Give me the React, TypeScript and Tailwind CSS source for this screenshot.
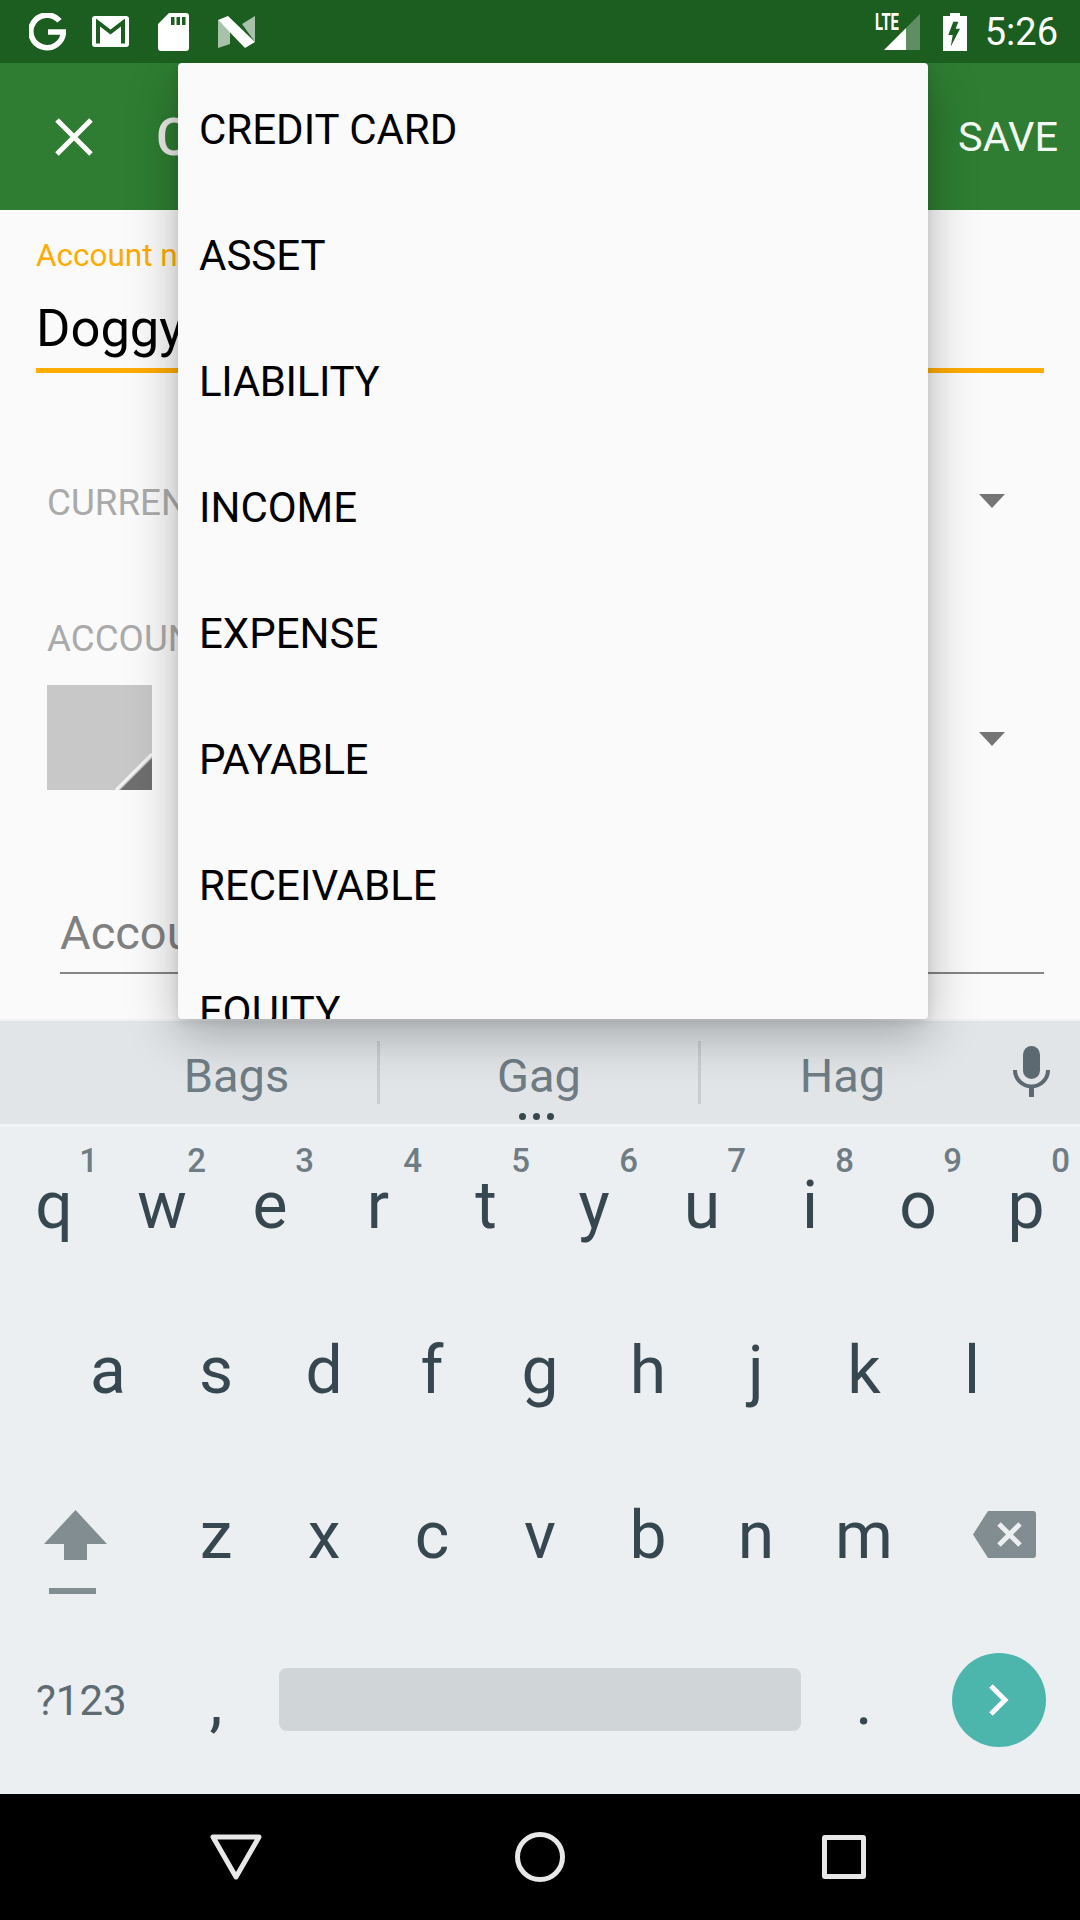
import React from "react";

const row1 = ["q", "w", "e", "r", "t", "y", "u", "i", "o", "p"];
const nums = ["1", "2", "3", "4", "5", "6", "7", "8", "9", "0"];
const row2 = ["a", "s", "d", "f", "g", "h", "j", "k", "l"];
const row3 = ["z", "x", "c", "v", "b", "n", "m"];
const menu = [
  { t: "CREDIT CARD", c: "" },
  { t: "ASSET", c: "" },
  { t: "LIABILITY", c: "tracking-[-0.35px]" },
  { t: "INCOME", c: "" },
  { t: "EXPENSE", c: "" },
  { t: "PAYABLE", c: "tracking-[-0.5px]" },
  { t: "RECEIVABLE", c: "" },
  { t: "EQUITY", c: "" },
];

function Key({ c, sup }: { c: string; sup?: string }) {
  return (
    <div className="relative w-[108px] h-full flex items-center justify-center pb-[9px] text-[66px] leading-[80px] text-[#37474f]">
      {c}
      {sup && (
        <span className="absolute right-[10px] top-[14px] text-[33px] leading-[40px] font-medium text-[#6f7c83]">{sup}</span>
      )}
    </div>
  );
}

function Caret({ className }: { className: string }) {
  return (
    <svg width="26" height="14" viewBox="0 0 26 14" className={className}>
      <path d="M0 0H26L13 14Z" fill="#757575" />
    </svg>
  );
}

export default function App() {
  return (
    <div className="relative w-[1080px] h-[1920px] overflow-hidden flex flex-col bg-[#fafafa] font-['Roboto',sans-serif]">
      {/* status bar */}
      <div className="relative z-20 h-[63px] shrink-0 bg-[#1b5e20] flex items-center text-white">
        <svg width="37" height="38" viewBox="0 0 37 38" className="ml-[29px]" fill="none">
          <path d="M30.5 7.8A16.3 16.3 0 1 0 34.4 19H19" stroke="#fff" strokeWidth="5.6" />
        </svg>
        <svg width="37" height="31" viewBox="0 0 37 31" className="ml-[26px]">
          <rect x="0" y="0" width="37" height="31" rx="3" fill="#fff" />
          <path d="M6 27.500V6.500L18.500 16L31 6.500V27.500" stroke="#1b5e20" strokeWidth="4" fill="none" />
        </svg>
        <svg width="31" height="38" viewBox="0 0 31 38" className="ml-[29px]">
          <path d="M11 0H28a3 3 0 0 1 3 3V35a3 3 0 0 1-3 3H3a3 3 0 0 1-3-3V11Z" fill="#fff" />
          <path d="M13 4h3.500v8H13ZM18.500 4H22v8h-3.500ZM24 4h3.500v8H24Z" fill="#1b5e20" />
        </svg>
        <svg width="37" height="32" viewBox="0 0 37 32" className="ml-[29px]">
          <path d="M0 4L12 16V28L0 32Z" fill="#fff" opacity="0.62" />
          <path d="M24 8L37 0V26Z" fill="#fff" opacity="0.62" />
          <path d="M0 4L10 0L37 26L27 32Z" fill="#fff" />
        </svg>
        <svg width="46" height="38" viewBox="0 0 46 38" className="ml-auto overflow-visible">
          <text x="0" y="17" fontSize="23" fontWeight="700" fill="#fff" textLength="24" lengthAdjust="spacingAndGlyphs" fontFamily="Roboto">LTE</text>
          <path d="M31 15L45 1V37H31Z" fill="#fff" opacity="0.3" />
          <path d="M9 37L31 15V37Z" fill="#fff" />
        </svg>
        <svg width="24" height="38" viewBox="0 0 24 38" className="ml-[22px]">
          <path d="M7 0H17V3H24V38H0V3H7Z" fill="#fff" />
          <path d="M10.300 8.700H15.300L12.700 15.700H17L7.700 33.700L9.700 22H5.300Z" fill="#1b5e20" />
        </svg>
        <span className="ml-[18px] mr-[22px] text-[38px] leading-[44px]">5:26</span>
      </div>

      {/* toolbar */}
      <div className="h-[147px] shrink-0 bg-[#2e7d32] flex items-center text-white">
        <svg width="38" height="38" viewBox="0 0 38 38" className="ml-[55px]" fill="none">
          <path d="M2 2L36 36M36 2L2 36" stroke="#fff" strokeWidth="5" />
        </svg>
        <span className="ml-[63px] text-[52.500px] leading-[60px] font-medium text-[#eaeaea]">Create Account</span>
        <span className="ml-auto mr-[22px] text-[41.500px] leading-[50px] text-[#f4f8f4]">SAVE</span>
      </div>

      {/* form */}
      <div className="h-[809px] shrink-0 pt-[28px] pl-[36px] pr-[36px] flex flex-col">
        <div className="h-[36px] flex items-center text-[31.500px] text-[#ffab00]">Account name</div>
        <div className="mt-[14px] h-[80px] flex items-center text-[52.500px] text-black">Doggy</div>
        <div className="h-[5px] bg-[#ffab00]" />
        <div className="mt-[67px] h-[124px] flex items-center justify-between pl-[11px] pr-[39px]">
          <span className="pt-[2px] text-[36.750px] text-[#aaaaaa]">CURRENCY</span>
          <Caret className="shrink-0 mb-[2px]" />
        </div>
        <div className="mt-[54px] pt-[2px] h-[40px] flex items-center pl-[11px] text-[36.750px] text-[#aaaaaa]">ACCOUNT COLOR</div>
        <div className="mt-[27px] h-[105px] flex items-center justify-between pl-[11px] pr-[39px]">
          <div className="relative w-[105px] h-[105px] bg-[#c8c8c8]">
            <svg width="105" height="105" viewBox="0 0 105 105" className="absolute inset-0">
              <path d="M69 105L105 69" stroke="#f2f2f2" strokeWidth="3" />
              <path d="M73 105L105 73V105Z" fill="#6f6f6f" />
            </svg>
          </div>
          <Caret className="shrink-0 mt-[2px]" />
        </div>
        <div className="mt-[104px] ml-[24px] h-[78px] flex items-center text-[47px] text-[#808080]">Account description</div>
        <div className="ml-[24px] h-[2px] bg-[#858585]" />
      </div>

      {/* keyboard */}
      <div className="flex-1 flex flex-col bg-[#ebeff2]">
        <div className="h-[2px] bg-[#f0f3f5]" />
        <div className="relative h-[103px] bg-[#e1e5e8] flex items-center text-[47px] text-[#6f7c83]">
          <div className="w-[377px] pl-[96px] pt-[8px] text-center">Bags</div>
          <div className="w-[3px] h-[63px] bg-[#c9ced1]" />
          <div className="w-[318px] pt-[8px] text-center">Gag</div>
          <div className="w-[3px] h-[63px] bg-[#c9ced1]" />
          <div className="w-[283px] pt-[8px] text-center">Hag</div>
          <svg width="37" height="51" viewBox="0 0 37 51" className="ml-[29px] mb-[2px]" fill="none">
            <rect x="10" y="0" width="17" height="33" rx="8.500" fill="#5c6970" />
            <path d="M2 24a16.500 16.500 0 0 0 33 0" stroke="#5c6970" strokeWidth="4" />
            <path d="M18.500 40V51" stroke="#5c6970" strokeWidth="5" />
          </svg>
          <div className="absolute left-[519px] bottom-[4px] flex gap-[7px]">
            <div className="w-[7px] h-[7px] rounded-full bg-[#37474f]" />
            <div className="w-[7px] h-[7px] rounded-full bg-[#37474f]" />
            <div className="w-[7px] h-[7px] rounded-full bg-[#37474f]" />
          </div>
        </div>
        <div className="h-[3px] bg-[#f2f4f6]" />
        <div className="h-[166px] flex">
          {row1.map((c, i) => (
            <Key key={c} c={c} sup={nums[i]} />
          ))}
        </div>
        <div className="h-[165px] flex pl-[54px]">
          {row2.map((c) => (
            <Key key={c} c={c} />
          ))}
        </div>
        <div className="h-[165px] flex items-center">
          <div className="w-[162px] pl-[44px] mt-[23px]">
            <svg width="63" height="84" viewBox="0 0 63 84" className="block">
              <path d="M31.500 0L63 34H43V50H20V34H0Z" fill="#828d91" />
              <rect x="5" y="78" width="47" height="6" fill="#828d91" />
            </svg>
          </div>
          {row3.map((c) => (
            <Key key={c} c={c} />
          ))}
          <svg width="63" height="47" viewBox="0 0 63 47" className="ml-[55px] mb-[12px]">
            <path d="M15 0H60a3 3 0 0 1 3 3V44a3 3 0 0 1-3 3H15L0 23.500Z" fill="#828d91" />
            <path d="M26 13L47 34M47 13L26 34" stroke="#ebeff2" strokeWidth="5" />
          </svg>
        </div>
        <div className="h-[153px] flex items-center">
          <div className="w-[162px] pl-[36px] pt-[2px] text-[42px] text-[#5f6b73]">?123</div>
          <div className="w-[108px] text-center pt-[5px] text-[66px] leading-[80px] text-[#37474f]">,</div>
          <div className="ml-[9px] w-[522px] h-[63px] rounded-[8px] bg-[#d0d5d8]" />
          <div className="ml-[9px] w-[108px] text-center pt-[5px] text-[66px] leading-[80px] text-[#37474f]">.</div>
          <div className="ml-[34px] w-[94px] h-[94px] rounded-full bg-[#4db6ac] flex items-center justify-center">
            <svg width="22" height="34" viewBox="0 0 22 34" fill="none">
              <path d="M3 3L17 17L3 31" stroke="#fff" strokeWidth="5" />
            </svg>
          </div>
        </div>
      </div>

      {/* nav bar */}
      <div className="h-[126px] shrink-0 bg-black flex items-center">
        <svg width="52" height="46" viewBox="0 0 52 46" className="ml-[210px]" fill="none">
          <path d="M3 3H49L26 43Z" stroke="#e8e8e8" strokeWidth="5" strokeLinejoin="round" />
        </svg>
        <svg width="50" height="50" viewBox="0 0 50 50" className="ml-[253px]" fill="none">
          <circle cx="25" cy="25" r="22.500" stroke="#e8e8e8" strokeWidth="5" />
        </svg>
        <div className="ml-[257px] w-[44px] h-[44px] rounded-[3px] border-[5px] border-[#e8e8e8]" />
      </div>

      {/* open dropdown menu */}
      <div className="absolute left-[178px] top-[63px] w-[750px] h-[956px] z-10 overflow-hidden rounded-[4px] bg-[#fafafa] pt-[3px] shadow-[0_16px_50px_rgba(0,0,0,0.28),0_2px_10px_rgba(0,0,0,0.1)]">
        {menu.map((m) => (
          <div key={m.t} className={`h-[126px] flex items-center pl-[21px] text-[42px] text-black ${m.c}`}>
            {m.t}
          </div>
        ))}
      </div>
    </div>
  );
}
